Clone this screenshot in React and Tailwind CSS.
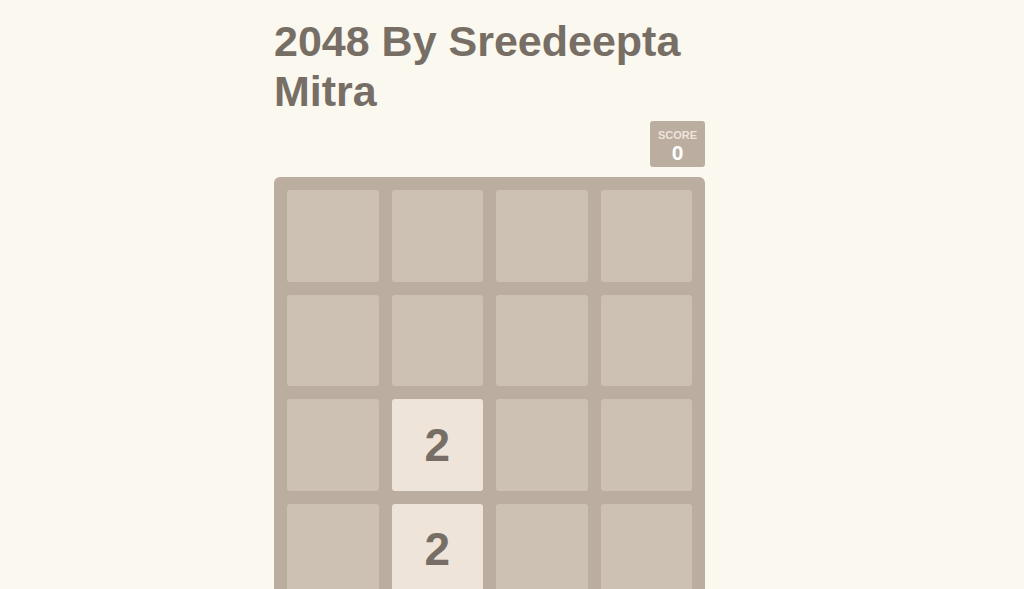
import React from 'react';

const board = [
  [0, 0, 0, 0],
  [0, 0, 0, 0],
  [0, 2, 0, 0],
  [0, 2, 0, 0],
];

const Tile = ({ value }) => {
  if (!value) {
    return <div className="aspect-square rounded-[3px] bg-[#cdc1b4]" />;
  }
  return (
    <div className="aspect-square rounded-[3px] bg-[#eee4da] flex items-center justify-center text-[#776e65] font-bold text-[46px] leading-none">
      {value}
    </div>
  );
};

export default function App() {
  return (
    <div
      className="min-h-screen bg-[#faf8ef]"
      style={{ fontFamily: '"Liberation Sans", Arial, sans-serif' }}
    >
      <div className="mx-auto w-[476px] pt-[16px]">
        <div className="w-[431px]">
          <h1 className="text-[43px] leading-[50px] font-bold text-[#776e65]">
            2048 By Sreedeepta Mitra
          </h1>

          {/* Score */}
          <div className="mt-[5px] flex justify-end">
            <div className="w-[55px] h-[46px] rounded-[3px] bg-[#bbada0] flex flex-col items-center pt-[8px] font-bold">
              <span className="text-[11px] leading-[13px] text-[#eee4da]">SCORE</span>
              <span className="text-[21px] leading-[21px] text-white">0</span>
            </div>
          </div>

          {/* Board */}
          <div className="mt-[10px] rounded-[6px] bg-[#bbada0] p-[13px] grid grid-cols-4 gap-[13px]">
            {board.flat().map((v, i) => (
              <Tile key={i} value={v} />
            ))}
          </div>
        </div>
      </div>
    </div>
  );
}
